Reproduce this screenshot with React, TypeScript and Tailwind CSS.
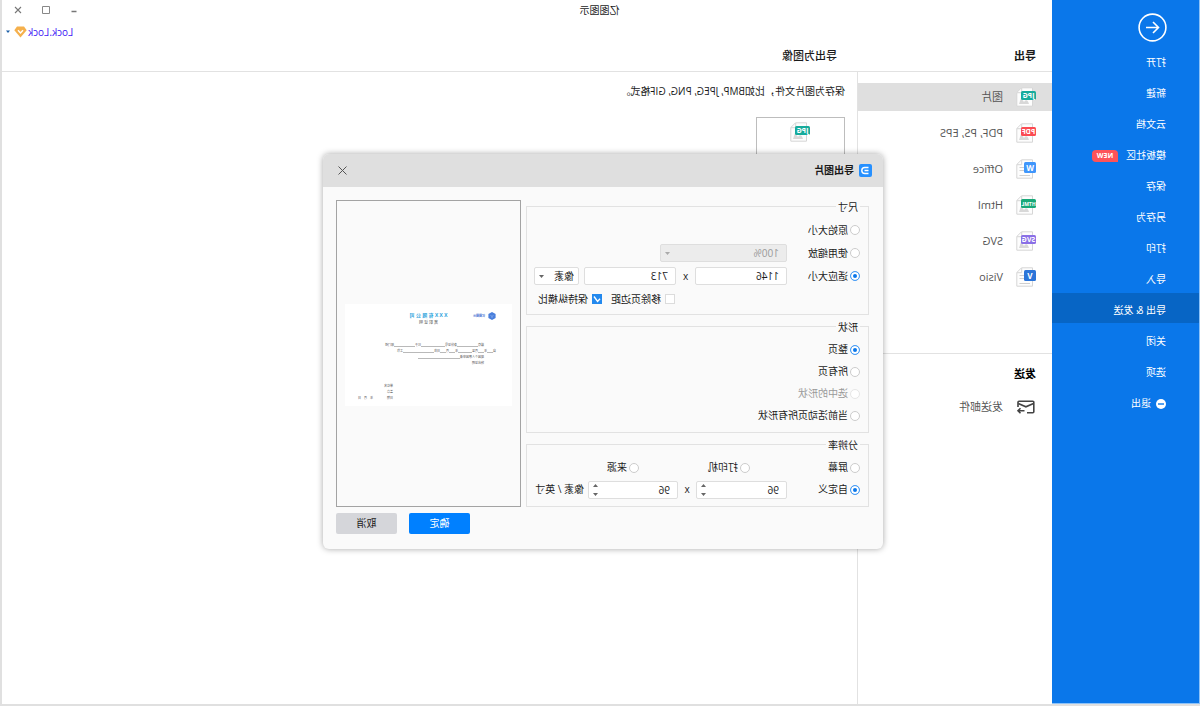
import { useState, type ReactNode } from "react";

type ExportFormat = {
  label: string;
  badge: string;
  color: string;
  wide: boolean;
};

const menuItems = [
  { label: "打开" },
  { label: "新建" },
  { label: "云文档" },
  { label: "模板社区", badge: "NEW" },
  { label: "保存" },
  { label: "另存为" },
  { label: "打印" },
  { label: "导入" },
  { label: "导出 & 发送", active: true },
  { label: "关闭" },
  { label: "选项" },
  { label: "退出", exit: true },
];

const formats: ExportFormat[] = [
  { label: "图片", badge: "JPG", color: "#17ab9c", wide: true },
  { label: "PDF, PS, EPS", badge: "PDF", color: "#fb4b52", wide: true },
  { label: "Office", badge: "W", color: "#3f96fb", wide: false },
  { label: "Html", badge: "HTML", color: "#18a878", wide: true },
  { label: "SVG", badge: "SVG", color: "#8a70e6", wide: true },
  { label: "Visio", badge: "V", color: "#2b74d8", wide: false },
];

function FileIcon({ badge, color, wide }: Omit<ExportFormat, "label">) {
  return (
    <svg width="20" height="20" viewBox="0 0 20 20" className="shrink-0" aria-hidden="true">
      <path d="M3.5 .8h11l4.7 4.7v13.7H3.5z" fill="#fdfdfd" stroke="#d6d6d6" />
      <path d="M14.3 1v4.7H19" fill="none" stroke="#d6d6d6" />
      {wide ? (
        <path d="M7 17c1-4 3-5 5-2l3-4 2 6z" fill="#d8d8d8" />
      ) : (
        <path d="M12 8.500h4.500M12 11.500h4.500M6 16.500h10.500" stroke="#cfcfcf" />
      )}
      <rect y={wide ? 4 : 3} width={wide ? 15 : 12} height={wide ? 9 : 11} rx="1.500" fill={color} />
      <text
        x={wide ? 7.5 : 6}
        y={wide ? 11 : 11.500}
        textAnchor="middle"
        fill="#fff"
        fontSize={badge.length > 3 ? 5 : wide ? 7 : 8}
        className="font-['Open_Sans',sans-serif] font-bold"
      >
        {badge}
      </text>
    </svg>
  );
}

function Sidebar() {
  return (
    <nav className="flex w-[148px] shrink-0 flex-col border-b border-l border-[#8cc2f8] bg-[#0a77ea] text-[10px] text-white">
      <button type="button" aria-label="返回" className="mt-[13px] ml-8 size-[29px]">
        <svg width="29" height="29" viewBox="0 0 29 29" fill="none" stroke="#fff" strokeWidth="1.600">
          <circle cx="14.500" cy="14.500" r="13.400" />
          <path d="M21 14.500H8.500M14 9l-5.500 5.500L14 20" />
        </svg>
      </button>
      <ul className="mt-[3px] flex flex-col gap-px">
        {menuItems.map((item) => (
          <li key={item.label}>
            <button
              type="button"
              className={`flex h-[30px] w-full items-center pt-[5px] pl-[33px] ${
                item.active ? "bg-[#0765c5]" : ""
              }`}
            >
              {item.exit ? (
                <svg width="10" height="10" viewBox="0 0 10 10" className="mr-[5px]">
                  <circle cx="5" cy="5" r="5" fill="#fff" />
                  <path d="M2 5h6" stroke="#0a77ea" strokeWidth="1.400" />
                </svg>
              ) : null}
              {item.label}
              {item.badge ? (
                <span className="ml-2 flex h-3 w-[26px] items-center justify-center rounded-t-[4px] rounded-br-[4px] bg-[#fd5359] text-[7px] leading-3 font-bold">
                  {item.badge}
                </span>
              ) : null}
            </button>
          </li>
        ))}
      </ul>
    </nav>
  );
}

function WindowHeader() {
  return (
    <header className="flex h-[72px] flex-col border-b border-[#e2e2e2]">
      <div className="flex h-5 items-center">
        <h1 className="flex-1 pr-[62px] text-center text-[10px]">亿图图示</h1>
        <div className="flex w-[83px] items-center gap-[18px] pb-px pl-[6px]">
          <button type="button" aria-label="最小化">
            <svg width="10" height="10" viewBox="0 0 10 10">
              <path d="M2.500 6.500h5" stroke="#777" strokeWidth="1.500" />
            </svg>
          </button>
          <button type="button" aria-label="最大化">
            <svg width="10" height="10" viewBox="0 0 10 10">
              <path d="M1.500 1.500h7v7h-7z" fill="none" stroke="#888" />
            </svg>
          </button>
          <button type="button" aria-label="关闭窗口">
            <svg width="10" height="10" viewBox="0 0 10 10">
              <path d="M2 2l6 6M8 2l-6 6" stroke="#777" strokeWidth="1.100" />
            </svg>
          </button>
        </div>
      </div>
      <div className="flex h-6 items-center justify-end pr-[3px]">
        <button type="button" className="flex items-center gap-px text-[10px] text-[#3c14f5]">
          Lock.Lock
          <svg width="13" height="12" viewBox="0 0 13 12">
            <path d="M3 .5h7l2.700 3.800-6.200 7.200L.3 4.300z" fill="#f5b04c" />
            <path d="M4 4.200l2.500 2.800L9 4.200" fill="none" stroke="#fff" strokeWidth="1.400" />
          </svg>
          <svg width="6" height="4" viewBox="0 0 6 4" className="ml-[2px]">
            <path d="M1 .5h4L3 3z" fill="#1b5fa8" />
          </svg>
        </button>
      </div>
      <div className="flex h-6 items-center pl-4 text-[11px]">
        <h2 className="w-[199px] font-bold">导出</h2>
        <h2 className="font-medium">导出为图像</h2>
      </div>
    </header>
  );
}

function FormatList() {
  return (
    <aside className="flex w-[195px] shrink-0 flex-col border-r border-[#e2e2e2] text-[11px] text-[#555]">
      <ul className="flex flex-col gap-2 pt-[11px]">
        {formats.map((format, index) => (
          <li key={format.label}>
            <button
              type="button"
              className={`flex h-7 w-full items-center gap-[13px] pl-4 ${index === 0 ? "bg-[#dfdfdf]" : ""}`}
            >
              <FileIcon badge={format.badge} color={format.color} wide={format.wide} />
              {format.label}
            </button>
          </li>
        ))}
      </ul>
      <div className="mt-[62px] border-t border-[#e2e2e2] pl-4">
        <h2 className="mt-3 leading-4 font-bold text-black">发送</h2>
        <button type="button" className="mt-[17px] flex h-4 items-center gap-[13px]">
          <svg width="20" height="16" viewBox="0 0 20 16" fill="none" stroke="#444" strokeWidth="1.600">
            <path d="M9 13.700H3.200a1 1 0 0 1-1-1V3.300a1 1 0 0 1 1-1H17a1 1 0 0 1 1 1V8" />
            <path d="M2.500 4.500l7.600 3.300 7.600-3.300" />
            <path d="M11.500 11.800H18M15.500 9.300l2.500 2.500-2.500 2.500" />
          </svg>
          发送邮件
        </button>
      </div>
    </aside>
  );
}

const radioClass =
  "size-[10px] shrink-0 appearance-none rounded-full border border-[#cccccc] bg-white checked:border-[#4c9ff5] checked:bg-[#0a77ea] checked:shadow-[inset_0_0_0_2px_#fff] disabled:border-[#e6e6e6]";

type RadioProps = {
  name: string;
  label: string;
  className?: string;
  checked?: boolean;
  disabled?: boolean;
};

function Radio({ name, label, className = "", checked = false, disabled = false }: RadioProps) {
  return (
    <label className={`flex shrink-0 items-center gap-[2px] ${disabled ? "text-[#999]" : ""} ${className}`}>
      <input type="radio" name={name} defaultChecked={checked} disabled={disabled} className={radioClass} />
      {label}
    </label>
  );
}

function CheckBox({ label, checked = false }: { label: string; checked?: boolean }) {
  const [on, setOn] = useState(checked);

  return (
    <label className="flex items-center gap-1">
      <span className="grid size-[10px]">
        <input
          type="checkbox"
          checked={on}
          onChange={(e) => setOn(e.target.checked)}
          className="col-start-1 row-start-1 size-[10px] appearance-none border border-[#dcdcdc] bg-white checked:border-[#2389ee] checked:bg-[#2389ee]"
        />
        {on ? (
          <svg width="10" height="10" viewBox="0 0 10 10" className="pointer-events-none col-start-1 row-start-1">
            <path d="M2 4.800l2.400 2.600L8 2.500" fill="none" stroke="#fff" strokeWidth="1.400" />
          </svg>
        ) : null}
      </span>
      {label}
    </label>
  );
}

function Group({ title, className, children }: { title: string; className: string; children: ReactNode }) {
  return (
    <fieldset className={`border border-[#e2e2e2] pt-[5px] pl-2 ${className}`}>
      <legend className="px-[2px] leading-[14px]">{title}</legend>
      {children}
    </fieldset>
  );
}

const fieldClass = "h-[18px] rounded-[2px] border border-[#dedede] bg-white px-[7px] text-[10px] leading-4";

type DropDownProps = {
  label: string;
  value: string;
  className: string;
  disabled?: boolean;
};

function DropDown({ label, value, className, disabled = false }: DropDownProps) {
  return (
    <span className={`grid items-center ${className}`}>
      <select
        aria-label={label}
        disabled={disabled}
        className="col-start-1 row-start-1 h-[18px] w-full appearance-none rounded-[2px] border border-[#dedede] bg-white pl-[4px] text-[10px] leading-4 disabled:bg-[#ececec] disabled:pl-[7px] disabled:text-[#999] disabled:opacity-100"
      >
        <option>{value}</option>
      </select>
      <svg
        width="5"
        height="3"
        viewBox="0 0 5 3"
        className={`pointer-events-none col-start-1 row-start-1 mr-[5px] justify-self-end ${
          disabled ? "text-[#aaa]" : "text-[#666]"
        }`}
      >
        <path d="M0 0h5L2.500 3z" fill="currentColor" />
      </svg>
    </span>
  );
}

function Spinner({ label, className }: { label: string; className: string }) {
  return (
    <span className={`grid items-center ${className}`}>
      <input aria-label={label} defaultValue="96" className={`col-start-1 row-start-1 w-full ${fieldClass}`} />
      <svg
        width="5"
        height="12"
        viewBox="0 0 5 12"
        className="pointer-events-none col-start-1 row-start-1 mr-[5px] justify-self-end"
      >
        <path d="M0 3h5L2.500 0zM0 9h5L2.500 12z" fill="#666" />
      </svg>
    </span>
  );
}

function Blank({ className }: { className: string }) {
  return <span className={`h-[3px] shrink-0 border-b border-[#b9b9b9] ${className}`} />;
}

// Scaled-down first page of the document that is being exported.
function PagePreview() {
  return (
    <div className="flex h-[307px] flex-col justify-center border border-[#a3a3a3] px-2 pt-1">
      <div className="h-[102px] overflow-hidden bg-white text-[3px] leading-[6px] text-[#555]">
        <div className="grid grid-cols-[1fr_auto_1fr] items-start pt-2">
          <span className="flex items-center gap-[3px] pl-4 font-bold text-[#3d6fd0]">
            <svg width="8" height="8" viewBox="0 0 8 8">
              <path d="M4 0l3.600 2v4L4 8 .4 6V2z" fill="#4a7fdc" />
              <path d="M2.500 3.500L4 4.300l1.500-.8M4 4.300V6" fill="none" stroke="#9dbcf2" strokeWidth=".6" />
            </svg>
            亿图图示
          </span>
          <span className="text-center text-[5px] leading-[7px] font-bold text-[#2ba3dc]">
            X X X 有 限 公 司
            <span className="block text-[4px] font-normal text-[#555]">离 职 证 明</span>
          </span>
        </div>
        <div className="mt-4 flex items-center pl-7">
          兹有
          <Blank className="w-[21px]" />
          身份证号
          <Blank className="w-6" />
          已于
          <Blank className="w-[21px]" />
          部门任
        </div>
        <div className="flex items-center pl-4">
          自
          <Blank className="w-[6px]" />
          年
          <Blank className="w-[6px]" />
          月至
          <Blank className="w-[14px]" />
          年
          <Blank className="w-[6px]" />
          月
          <Blank className="w-[6px]" />
          日在
          <Blank className="w-[31px]" />
          工作
        </div>
        <div className="flex items-center pl-7">
          现因个人原因申请
          <Blank className="w-[42px]" />
        </div>
        <div className="pl-7">特此证明</div>
        <div className="mt-[17px] pl-[119px]">单位名</div>
        <div className="pl-[119px]">盖章</div>
        <div className="flex gap-[14px] pl-[119px]">
          日期
          <span className="flex gap-[3px]">
            <span>年</span>
            <span>月</span>
            <span>日</span>
          </span>
        </div>
      </div>
    </div>
  );
}

function ExportDialog() {
  return (
    <section
      role="dialog"
      aria-labelledby="export-title"
      className="w-[560px] overflow-hidden rounded-[6px] bg-[#fafafa] text-[10px] shadow-[0_0_6px_rgba(0,0,0,0.35)]"
    >
      <header className="flex h-[33px] items-center bg-[#dfdfdf] pr-[14px] pl-[11px]">
        <svg width="13" height="13" viewBox="0 0 13 13">
          <rect width="13" height="13" rx="2" fill="#2690ff" />
          <path d="M3.500 3.500h3.700a3 3 0 0 1 0 6H3.500M3.500 6.500h4" fill="none" stroke="#fff" strokeWidth="1.400" />
        </svg>
        <h2 id="export-title" className="ml-[5px] flex-1 text-[10px] font-bold">
          导出图片
        </h2>
        <button type="button" aria-label="关闭">
          <svg width="11" height="11" viewBox="0 0 11 11">
            <path d="M1.500 1.500l8 8M9.500 1.500l-8 8" stroke="#555" />
          </svg>
        </button>
      </header>
      <div className="flex gap-[5px] pt-[13px] pr-[13px] pb-[15px] pl-[14px]">
        <div className="flex w-[343px] flex-col gap-[5px]">
          <Group title="尺寸" className="pb-[3px]">
            <div className="flex h-[23px] items-center">
              <Radio name="size" label="原始大小" />
            </div>
            <div className="flex h-[23px] items-center">
              <Radio name="size" label="使用缩放" className="w-[73px]" />
              <DropDown label="缩放比例" value="100%" className="w-[127px]" disabled />
            </div>
            <div className="flex h-[23px] items-center">
              <Radio name="size" label="适应大小" className="w-[73px]" checked />
              <input aria-label="宽度" defaultValue="1146" className={`w-[92px] ${fieldClass}`} />
              <span className="w-[19px] text-center">x</span>
              <input aria-label="高度" defaultValue="713" className={`w-[92px] ${fieldClass}`} />
              <DropDown label="单位" value="像素" className="ml-[5px] w-[45px]" />
            </div>
            <div className="flex h-[23px] items-center gap-[9px] pl-[185px]">
              <CheckBox label="移除页边距" />
              <CheckBox label="保持纵横比" checked />
            </div>
          </Group>
          <Group title="形状" className="pb-[5px]">
            <Radio name="shape" label="整页" className="h-[22px]" checked />
            <Radio name="shape" label="所有页" className="h-[22px]" />
            <Radio name="shape" label="选中的形状" className="h-[22px]" disabled />
            <Radio name="shape" label="当前活动页所有形状" className="h-[22px]" />
          </Group>
          <Group title="分辨率" className="pb-[5px]">
            <div className="flex h-[22px] items-center">
              <Radio name="dpi" label="屏幕" className="w-[110px]" />
              <Radio name="dpi" label="打印机" className="w-[111px]" />
              <Radio name="dpi" label="来源" />
            </div>
            <div className="flex h-[22px] items-center">
              <Radio name="dpi" label="自定义" className="w-[73px]" checked />
              <Spinner label="水平分辨率" className="w-[91px]" />
              <span className="w-[18px] text-center">x</span>
              <Spinner label="垂直分辨率" className="w-[90px]" />
              <span className="ml-1">像素 / 英寸</span>
            </div>
          </Group>
        </div>
        <div className="flex flex-1 flex-col">
          <PagePreview />
          <div className="mt-[6px] flex justify-end gap-3">
            <button type="button" className="h-[21px] w-[61px] rounded-[2px] bg-[#0080ff] text-white">
              确定
            </button>
            <button type="button" className="h-[21px] w-[61px] rounded-[2px] bg-[#d5d6da]">
              取消
            </button>
          </div>
        </div>
      </div>
    </section>
  );
}

export default function App() {
  return (
    <div className="relative flex min-h-screen -scale-x-100 border-r-2 border-b-2 border-[#e0e0e0] bg-white font-['Open_Sans','Noto_Sans_CJK_SC',sans-serif] text-[#1a1a1a]">
      <Sidebar />
      <div className="flex flex-1 flex-col">
        <WindowHeader />
        <div className="flex flex-1">
          <FormatList />
          <main className="flex-1 pt-3 pl-3">
            <p className="text-[10px] leading-[14px]">保存为图片文件，比如BMP, JPEG, PNG, GIF格式。</p>
            <button
              type="button"
              aria-label="JPG"
              className="mt-[19px] flex h-[89px] w-[89px] justify-center border border-[#bdbdbd] pt-1"
            >
              <FileIcon badge="JPG" color="#17ab9c" wide />
            </button>
          </main>
        </div>
      </div>
      <div className="absolute inset-0 flex items-center justify-center pr-1 pb-[2px]">
        <ExportDialog />
      </div>
    </div>
  );
}
